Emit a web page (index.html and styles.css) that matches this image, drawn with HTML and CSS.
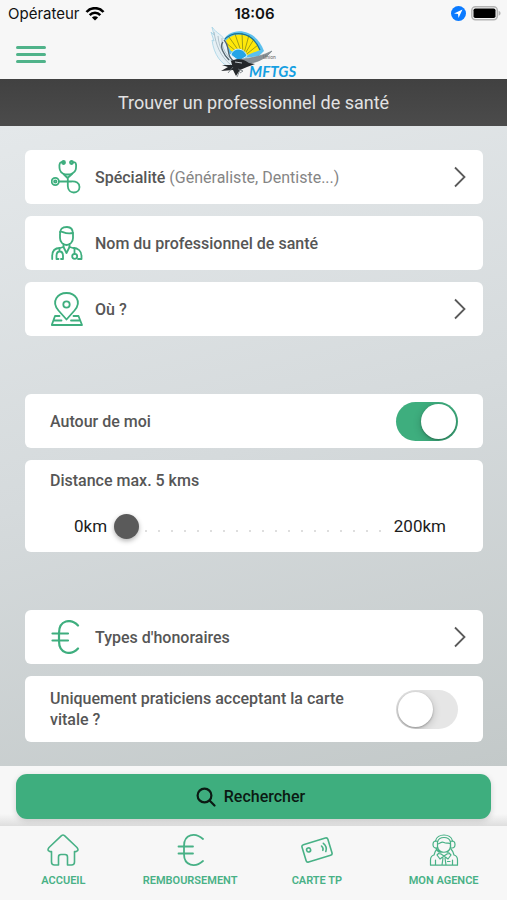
FILE: index.html
```html
<!DOCTYPE html>
<html lang="fr">
<head>
<meta charset="utf-8">
<meta name="viewport" content="width=device-width, initial-scale=1">
<title>Trouver un professionnel de santé</title>
<link rel="stylesheet" href="styles.css">
</head>
<body>
<header class="top">
  <div class="status">
    <div class="status-left">
      <span>Opérateur</span>
      <svg width="20" height="14" viewBox="0 0 20 14" fill="none" stroke="#000" stroke-width="2.6" aria-hidden="true">
        <path d="M1.5 5C6-.1 14-.1 18.500 5M4.700 8.200C7.700 5 12.300 5 15.300 8.200"/>
        <path d="M10 13.500L6.900 10.400C8.600 8.800 11.400 8.800 13.100 10.400Z" fill="#000" stroke="none"/>
      </svg>
    </div>
    <time class="clock">18:06</time>
    <div class="status-right">
      <svg width="15" height="15" viewBox="0 0 15 15" aria-hidden="true">
        <circle cx="7.500" cy="7.500" r="7.500" fill="#0a7aff"/>
        <path d="M11.500 3.500L3 7.500L7 8L7.500 12Z" fill="#fff"/>
      </svg>
      <svg width="30" height="15" viewBox="0 0 30 15" aria-hidden="true">
        <rect x=".8" y=".8" width="25.500" height="12.900" rx="3.600" fill="#f7f7f7" stroke="#b4b4b4" stroke-width="1.500"/>
        <rect x="2.500" y="2.500" width="22" height="9.500" rx="1.800"/>
        <path d="M27.600 4.700C30.200 5.700 30.200 8.800 27.600 9.800Z" fill="#b4b4b4"/>
      </svg>
    </div>
  </div>
  <div class="brand-row">
    <button class="menu" type="button" aria-label="Menu"><span></span><span></span><span></span></button>
    <svg class="logo" width="90" height="54" viewBox="0 0 90 54" role="img" aria-label="MFTGS">
      <path d="M14 14C20 0 46-1 55 24L50 29L34 31L18 26Z" fill="#5cc0ee"/>
      <path d="M16 15C23 4 44 4 51 23L36 29L22 24Z" fill="#ffe80a"/>
      <path d="M34 30L16 15M34 30L20 10M34 30L26 7M34 30L33 6M34 30L40 8M34 30L45 12M34 30L49 18" stroke="#8a8b16" fill="none" stroke-width=".8"/>
      <path d="M14 14C22 3 43 3 51 23" stroke="#197092" fill="none" stroke-width="1.200"/>
      <path d="M22 28C24 20 35 20 38 29L30 34Z" fill="#24a5e6" stroke="#d9f4ff"/>
      <path d="M3 0C7 6 14 8 17 15C20 23 18 29 25 35L22 41C12 37 5 28 3 13L5 14L2 5L5 8Z" fill="#e6f0f5" stroke="#a5d3e6" stroke-width=".8"/>
      <path d="M5 5C7 18 11 29 22 38M9 9C10 20 14 28 23 35M13 11C12 21 18 29 24 34" stroke="#a3b6c0" fill="none" stroke-width=".8"/>
      <path d="M15 13C22 20 16 29 26 35M14 15C10 19 15 28 20 33" stroke="#53636d" fill="none" stroke-width="1.300"/>
      <path d="M22 34C31 31 45 33 63 24C55 34 44 36 37 37Z" fill="#889096" stroke="#6f7a82" stroke-width=".6"/>
      <path d="M22 34C29 31 35 32 40 36L46 37L38 40L31 43L27 49L24 43L12 44L19 40L13 38L23 38Z" fill="#25282b"/>
      <path d="M29 42L34 44L31 46M31 43L28 50M24 40L19 46" stroke="#6b7479" fill="none" stroke-width=".8"/>
      <path d="M26 35L33 36" stroke="#bfc6ca"/>
      <text class="logo-small" x="54" y="32">Union</text>
      <text class="logo-name" x="40" y="50">MFTGS</text>
    </svg>
  </div>
</header>
<h1 class="title">Trouver un professionnel de santé</h1>

<form class="page" id="search">
  <section class="group">
    <button class="card row" type="button">
      <svg class="icon" viewBox="0 0 32 34" aria-hidden="true">
        <path d="M13 2.500H12C9 1 8 4 8.500 8C8.700 11 11 13.500 14 14.500H19C22 13.500 25 11 25 8C25.500 4 25 1 21 2.500"/>
        <circle cx="12.500" cy="2.500" r="1.500"/><circle cx="20.500" cy="2.500" r="1.500"/>
        <path d="M12.500 14L16.500 18L21 14M16.800 18V26C17 35 28.500 34 28.500 27C28.500 23 25 21 20 21.500H8"/>
        <circle cx="4.300" cy="21.500" r="3.600"/><circle cx="4.300" cy="21.500" r="1.200"/>
      </svg>
      <span class="label">Spécialité <span class="hint">(Généraliste, Dentiste...)</span></span>
      <svg class="chevron" viewBox="0 0 12 22" aria-hidden="true"><path d="M1 1.500L10.500 11L1 20.500"/></svg>
    </button>
    <label class="card row">
      <svg class="icon" viewBox="0 0 32 34" aria-hidden="true">
        <path d="M9 12V8C9 3 11 1 16 1C21 1 22 4 22 8V12C22 16 19 19 15.500 19C12 19 9 16 9 12Z"/>
        <path d="M9 6C11 4 13 9 22 7M12.500 18V21L9 22C4 22 1.200 25 1.200 30V33M18.500 18V21L22 22C27 22 30.500 25 30.500 30V33H27"/>
        <path d="M12.500 21L15.500 27L18.500 21M8.500 22V25.500M5.500 33V30C5.500 24 12 24 12 30V33M5.500 33H7.500M10 33H12M23.500 22V28"/>
        <circle cx="23.700" cy="30.300" r="2.500"/>
      </svg>
      <input class="name-input" type="text" placeholder="Nom du professionnel de santé" aria-label="Nom du professionnel de santé">
    </label>
    <button class="card row" type="button">
      <svg class="icon" viewBox="0 0 32 34" aria-hidden="true">
        <path d="M15.500 27.500L7.500 18.500C-.5 9 7 1 15.500 1C24 1 31.500 9 23.500 18.500Z"/>
        <circle cx="15.500" cy="12.500" r="3.200"/>
        <path d="M8.500 24H4L.8 33H31L27.500 24H22.500M3 28.500H10.500M20 28.500H29"/>
      </svg>
      <span class="label">Où ?</span>
      <svg class="chevron" viewBox="0 0 12 22" aria-hidden="true"><path d="M1 1.500L10.500 11L1 20.500"/></svg>
    </button>
  </section>

  <section class="group">
    <label class="card row">
      <span class="label">Autour de moi</span>
      <input class="switch" type="checkbox" checked>
    </label>
    <div class="card distance">
      <label class="label" for="distance">Distance max. 5 kms</label>
      <div class="range-row">
        <span>0km</span>
        <input class="range" id="distance" type="range" min="5" max="200" value="5">
        <span>200km</span>
      </div>
    </div>
  </section>

  <section class="group">
    <button class="card row" type="button">
      <svg class="icon euro" viewBox="0 0 32 34" aria-hidden="true">
        <path d="M27 5.500C20-2 8 0 8 13V21C8 34 20 36 27 28.500M1.500 13.500H17M1.500 20.500H17"/>
      </svg>
      <span class="label">Types d'honoraires</span>
      <svg class="chevron" viewBox="0 0 12 22" aria-hidden="true"><path d="M1 1.500L10.500 11L1 20.500"/></svg>
    </button>
    <label class="card row tall">
      <span class="label">Uniquement praticiens acceptant la carte vitale ?</span>
      <input class="switch" type="checkbox">
    </label>
  </section>
</form>

<footer class="bottom">
  <div class="action">
    <button class="submit" type="submit" form="search">
      <svg width="20" height="20" viewBox="0 0 20 20" fill="none" stroke="#0b1a13" stroke-width="2.200" stroke-linecap="round" aria-hidden="true"><circle cx="8.500" cy="8.500" r="6.900"/><path d="M13.800 13.800L18.500 18.500"/></svg>
      <span>Rechercher</span>
    </button>
  </div>
  <nav class="tabs">
    <a class="tab" href="#accueil">
      <svg class="tab-icon" viewBox="0 0 32 32" aria-hidden="true">
        <path d="M14.500 1.600Q16 .5 17.500 1.600L30 13.500Q32 16 30 17Q29 18 27.500 17.500V28Q27.500 31 24.500 31H20.500V23Q20.500 20.500 18 20.500H14Q11.500 20.500 11.500 23V31H7.500Q4.500 31 4.500 28V17.500Q3 18 2 17Q0 16 2 13.500Z"/>
      </svg>
      <span>ACCUEIL</span>
    </a>
    <a class="tab" href="#remboursement">
      <svg class="tab-icon" viewBox="0 0 32 32" aria-hidden="true">
        <path d="M29 5C21-2 10 0 10 12V20C10 32 21 34 29 27M4.500 12.500H19M4.500 19.500H19" stroke-width="1.800"/>
      </svg>
      <span>REMBOURSEMENT</span>
    </a>
    <a class="tab" href="#carte">
      <svg class="tab-icon" viewBox="0 0 32 32" aria-hidden="true">
        <g transform="rotate(-17 16 16)"><rect x="2.500" y="7" width="27" height="18" rx="2"/><circle cx="8" cy="13.500" r="2"/>
        <path d="M21.500 13.500Q23 16 21.500 18M24 11.500Q27 16 24 20"/></g>
      </svg>
      <span>CARTE TP</span>
    </a>
    <a class="tab" href="#agence">
      <svg class="tab-icon agent" viewBox="0 0 32 32" aria-hidden="true">
        <path d="M7.500 7C9-1 23-1 24.500 7M9.500 8C11 2 21 2 22.500 8"/>
        <path d="M9.500 7.500V14H8C4 14 4 7 8 7ZM22.500 7.500V14H24C28 14 28 7 24 7Z"/>
        <path d="M9.500 10C12 10 13 7 16 8.500C19 10 21 8 22.500 10V13C21 20 11 20 9.500 13M8 14Q9 18.500 15 18M12 17.500V20M20 17.500V20"/>
        <path d="M2.500 31.200V26Q2.500 22 6 21Q7 17 9 15M29.500 31.200V26Q29.500 22 26 21Q25 17 23 15M2.500 31.200H29.500M11 19L9 21L12 25L16 22L20 25L23 21L21 19M13 20L16 22L19 20M7.500 26V31M24.500 26V31M15 24L14 31M17 24L18 31M19.500 27.500H22"/>
      </svg>
      <span>MON AGENCE</span>
    </a>
  </nav>
</footer>
</body>
</html>
```
FILE: styles.css
```css
* { box-sizing: border-box; }

body {
  margin: 0;
  min-height: 100vh;
  display: flex;
  flex-direction: column;
  font-family: Roboto, "Liberation Sans", sans-serif;
  font-size: 16px;
  color: #565656;
  background: #f7f7f7;
}

button, input { font: inherit; color: inherit; }
button { border: 0; cursor: pointer; }

.top { background: #f7f7f7; }

.status {
  display: grid;
  grid-template-columns: 1fr auto 1fr;
  align-items: center;
  height: 27px;
  padding: 0 6px 0 8px;
  font-family: Inter, "Liberation Sans", sans-serif;
  font-size: 15px;
  color: #111;
}
.status-left, .status-right { display: flex; align-items: center; gap: 5px; }
.status-right { justify-content: flex-end; }
.clock { font-weight: 600; }

.brand-row {
  display: grid;
  grid-template-columns: 1fr auto 1fr;
  height: 52px;
  padding: 0 16px;
}
.menu {
  display: flex;
  flex-direction: column;
  justify-content: center;
  gap: 4px;
  width: 30px;
  padding: 0;
  background: none;
}
.menu span { height: 3px; border-radius: 2px; background: #50b38a; }
.logo { display: block; }
.logo-name {
  font: italic 700 15px Lato, sans-serif;
  fill: #159fe2;
}
.logo-small { font: 5px Roboto, sans-serif; fill: #666; }

.title {
  margin: 0;
  padding: 12px 16px;
  background: linear-gradient(#414141, #4b4b4b);
  color: #e2e2e2;
  font-size: 18px;
  font-weight: 400;
  line-height: 23px;
  text-align: center;
}

.page {
  flex: 1;
  display: flex;
  flex-direction: column;
  gap: 58px;
  padding: 24px 24px 24px 25px;
  background: linear-gradient(165deg, #e4e8ea, #d5dadc 50%, #c3c9c9);
}
.group { display: flex; flex-direction: column; gap: 12px; }

.card {
  width: 100%;
  border-radius: 6px;
  background: #fff;
  text-align: left;
}
.row {
  display: flex;
  align-items: center;
  min-height: 54px;
  padding: 0 25px;
}
.tall { min-height: 66px; }
.label {
  flex: 1;
  font-weight: 500;
  line-height: 21px;
}
.tall .label { padding-right: 40px; }
.hint { color: #858585; font-weight: 400; }

.icon {
  flex: none;
  width: 32px;
  height: 34px;
  margin: 0 12px 0 1px;
  fill: none;
  stroke: #3eae7e;
  stroke-width: 1.8;
  stroke-linecap: round;
  stroke-linejoin: round;
}
.euro { stroke-width: 2.2; }
.chevron {
  flex: none;
  width: 12px;
  height: 22px;
  margin-right: -8px;
  fill: none;
  stroke: #5a5a5a;
  stroke-width: 1.8;
}

.name-input {
  flex: 1;
  min-width: 0;
  padding: 0;
  border: 0;
  outline: 0;
  background: none;
  font-weight: 500;
}
.name-input::placeholder { color: #565656; opacity: 1; }

.switch {
  appearance: none;
  flex: none;
  display: flex;
  align-items: center;
  width: 62px;
  height: 39px;
  margin: 0;
  padding: 0 2px;
  border-radius: 20px;
  background: #e6e6e6;
  overflow: hidden;
}
.switch::before {
  content: "";
  width: 35px;
  height: 35px;
  border-radius: 50%;
  background: #fff;
  box-shadow: 0 2px 8px rgba(0, 0, 0, .2), 0 1px 2px rgba(0, 0, 0, .25);
}
.switch:checked { justify-content: flex-end; background: #3eae7e; }

.distance { padding: 10px 25px 2px; }
.distance .label { display: block; }
.range-row {
  display: flex;
  align-items: center;
  gap: 7px;
  height: 48px;
  margin-top: 11px;
  padding: 0 12px 0 24px;
  color: #1c1c1c;
  font-size: 17px;
}
.range {
  appearance: none;
  flex: 1;
  min-width: 0;
  height: 26px;
  margin: 0;
  background: radial-gradient(circle at 7px 18px, #dedede 1px, transparent 1px) 25px 0 / 13px 26px repeat-x;
}
.range::-webkit-slider-thumb {
  appearance: none;
  width: 25px;
  height: 25px;
  border-radius: 50%;
  background: #5a5a5a;
  box-shadow: 0 2px 5px rgba(0, 0, 0, .3);
}

.action {
  padding: 8px 16px 7px;
  background: linear-gradient(#f7f7f7 80%, #dedede);
}
.submit {
  display: flex;
  align-items: center;
  justify-content: center;
  gap: 8px;
  width: 100%;
  height: 45px;
  padding: 0 6px 0 0;
  border-radius: 11px;
  background: #3eae7e;
  color: #0b1a13;
  font-weight: 500;
  box-shadow: 0 2px 6px rgba(0, 0, 0, .15);
}
.tabs {
  display: grid;
  grid-template-columns: repeat(4, 1fr);
  height: 74px;
  background: #f7f7f7;
}
.tab {
  display: flex;
  flex-direction: column;
  align-items: center;
  gap: 8px;
  padding-top: 8px;
  color: #48b186;
  font-size: 11px;
  font-weight: 600;
  line-height: 14px;
  text-decoration: none;
}
.tab-icon {
  width: 32px;
  height: 32px;
  fill: none;
  stroke: #48b186;
  stroke-width: 1.6;
  stroke-linecap: round;
  stroke-linejoin: round;
}
.agent { stroke-width: 1.2; }
```
